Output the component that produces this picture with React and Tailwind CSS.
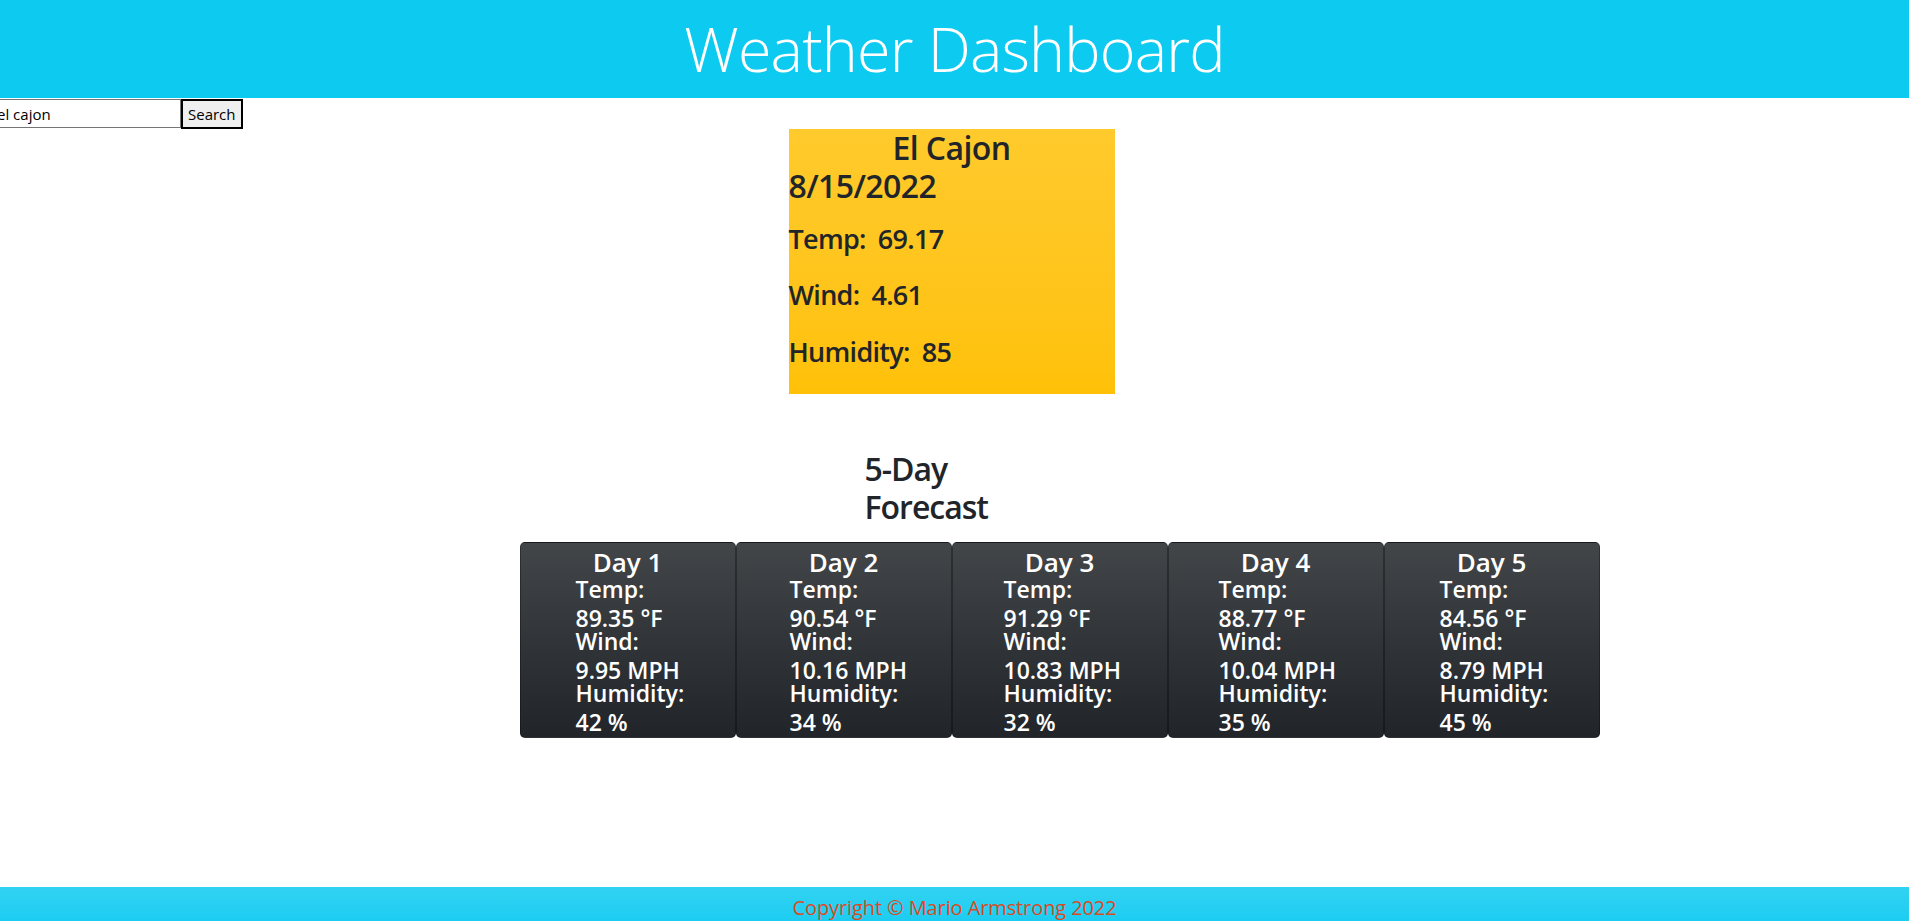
import React from "react";

const days = [
  { t: "89.35", w: "9.95", h: "42", pl: "pl-[55px]" },
  { t: "90.54", w: "10.16", h: "34", pl: "pl-[53px]" },
  { t: "91.29", w: "10.83", h: "32", pl: "pl-[51px]" },
  { t: "88.77", w: "10.04", h: "35", pl: "pl-[50px]" },
  { t: "84.56", w: "8.79", h: "45", pl: "pl-[55px]" },
];

export default function App() {
  return (
    <div className="min-h-screen flex flex-col bg-white font-['Open_Sans','Noto_Sans',sans-serif] text-[#212529]">
      <header className="h-[98px] bg-[#0dcaf0] flex items-center justify-center">
        <h1 className="text-[61px] font-light text-white leading-none tracking-[-0.8px] pb-[2px]">
          Weather Dashboard
        </h1>
      </header>

      <div className="flex h-[31px] items-start pt-px">
        <input
          defaultValue="el cajon"
          className="-ml-[6px] w-[187px] h-[29px] border border-[#767676] px-[2px] text-[15px] text-black outline-none bg-white"
        />
        <button className="h-[30px] border-2 border-black bg-[#efefef] px-[5px] text-[15px] text-black leading-none">
          Search
        </button>
      </div>

      <main className="w-[1320px] mx-auto">
        <section className="ml-[494px] w-[326px] bg-gradient-to-b from-[#ffca2c] to-[#ffc107] pb-[25px]">
          <h2 className="text-[32px] font-semibold leading-[38.4px] text-center tracking-[-0.6px]">El Cajon</h2>
          <h2 className="text-[32px] font-semibold leading-[38.4px] tracking-[-0.6px]">8/15/2022</h2>
          <div className="mt-[16px] flex flex-col gap-[23px]">
            <p className="text-[27px] font-semibold leading-[33.6px] flex gap-[12px] tracking-[-0.7px]">
              <span>Temp:</span>
              <span>69.17</span>
            </p>
            <p className="text-[27px] font-semibold leading-[33.6px] flex gap-[12px] tracking-[-0.7px]">
              <span>Wind:</span>
              <span>4.61</span>
            </p>
            <p className="text-[27px] font-semibold leading-[33.6px] flex gap-[12px] tracking-[-0.7px]">
              <span>Humidity:</span>
              <span>85</span>
            </p>
          </div>
        </section>

        <div className="pl-[225px] pr-[15px] mt-[56px]">
          <h2 className="ml-[345px] w-[140px] text-[32px] font-semibold leading-[38.4px] mb-[16px] tracking-[-1px]">
            5-Day Forecast
          </h2>
          <div className="grid grid-cols-5 w-[1080px]">
            {days.map((d, i) => (
              <div
                key={i}
                className="h-[196px] rounded-[5px] border border-black/30 bg-gradient-to-b from-[#424649] to-[#212529] text-white pt-[4px] pb-[3px]"
              >
                <h4 className="text-[26px] font-semibold leading-[31px] text-center">Day {i + 1}</h4>
                <div className={`${d.pl} text-[23px] font-semibold`}>
                  <div className="leading-[22px]">Temp:</div>
                  <div className="leading-[24px] mt-[6px]">{d.t} °F</div>
                  <div className="leading-[22px]">Wind:</div>
                  <div className="leading-[24px] mt-[6px]">{d.w} MPH</div>
                  <div className="leading-[22px]">Humidity:</div>
                  <div className="leading-[24px] mt-[6px]">{d.h} %</div>
                </div>
              </div>
            ))}
          </div>
        </div>
      </main>

      <footer className="mt-auto h-[34px] bg-gradient-to-b from-[#31d2f2] to-[#1ccdf1] flex justify-center">
        <p className="text-[20px] text-[#dc4a22] leading-none pt-[11px] tracking-[-0.1px]">
          Copyright © Mario Armstrong 2022
        </p>
      </footer>
    </div>
  );
}
